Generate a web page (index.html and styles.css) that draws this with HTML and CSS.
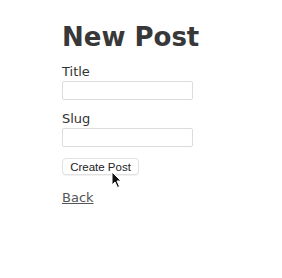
FILE: index.html
```html
<!DOCTYPE html>
<html lang="en">
<head>
    <meta charset="UTF-8">
    <title>New Post</title>
    <link rel="stylesheet" href="styles.css">
</head>
<body>
    <div class="page">
        <h1>New Post</h1>
        <form class="post-form">
            <div class="field">
                <label for="post-title">Title</label>
                <input type="text" id="post-title">
            </div>
            <div class="field">
                <label for="post-slug">Slug</label>
                <input type="text" id="post-slug">
            </div>
            <button type="button" class="submit-btn">Create Post</button>
        </form>
        <a href="#" class="back-link">Back</a>
    </div>

    <!-- mouse pointer over the button -->
    <svg class="pointer" width="12" height="18" viewBox="0 0 12 18">
        <path d="M1 1 L1 14 L4 11 L6.5 16.5 L8.5 15.5 L6 10 L10 10 Z" fill="#111" stroke="#fff" stroke-width="1"/>
    </svg>
</body>
</html>
```

FILE: styles.css
```css
body {
    margin: 0;
    background: #fff;
    font-family: 'DejaVu Sans', Verdana, sans-serif;
    color: #333;
}
.page {
    padding: 22px 0 0 62px;
}
h1 {
    margin: 0 0 11px;
    font-size: 26px;
    line-height: 31px;
    font-weight: bold;
    color: #383838;
}
.field {
    display: flex;
    flex-direction: column;
    align-items: flex-start;
    margin-bottom: 11px;
}
.field label {
    font-size: 13px;
    line-height: 16px;
    margin-bottom: 1px;
}
.field input {
    box-sizing: border-box;
    width: 131px;
    height: 19px;
    margin: 0;
    padding: 2px 4px;
    border: 1px solid #dcdcdc;
    border-radius: 2px;
    background: #fff;
}
.submit-btn {
    display: block;
    box-sizing: border-box;
    width: 77px;
    height: 17px;
    margin: 0 0 12px;
    padding: 0;
    font-family: 'Liberation Sans', Arial, sans-serif;
    font-size: 11.5px;
    color: #222;
    background: #fff;
    border: 1px solid #e2e2e2;
    border-radius: 4px;
    box-shadow: 0 1px 1px rgba(0,0,0,0.06);
}
.back-link {
    display: inline-block;
    font-size: 13px;
    line-height: 16px;
    color: #555;
    text-decoration: underline;
}
.pointer {
    position: absolute;
    left: 111px;
    top: 171px;
}
```
